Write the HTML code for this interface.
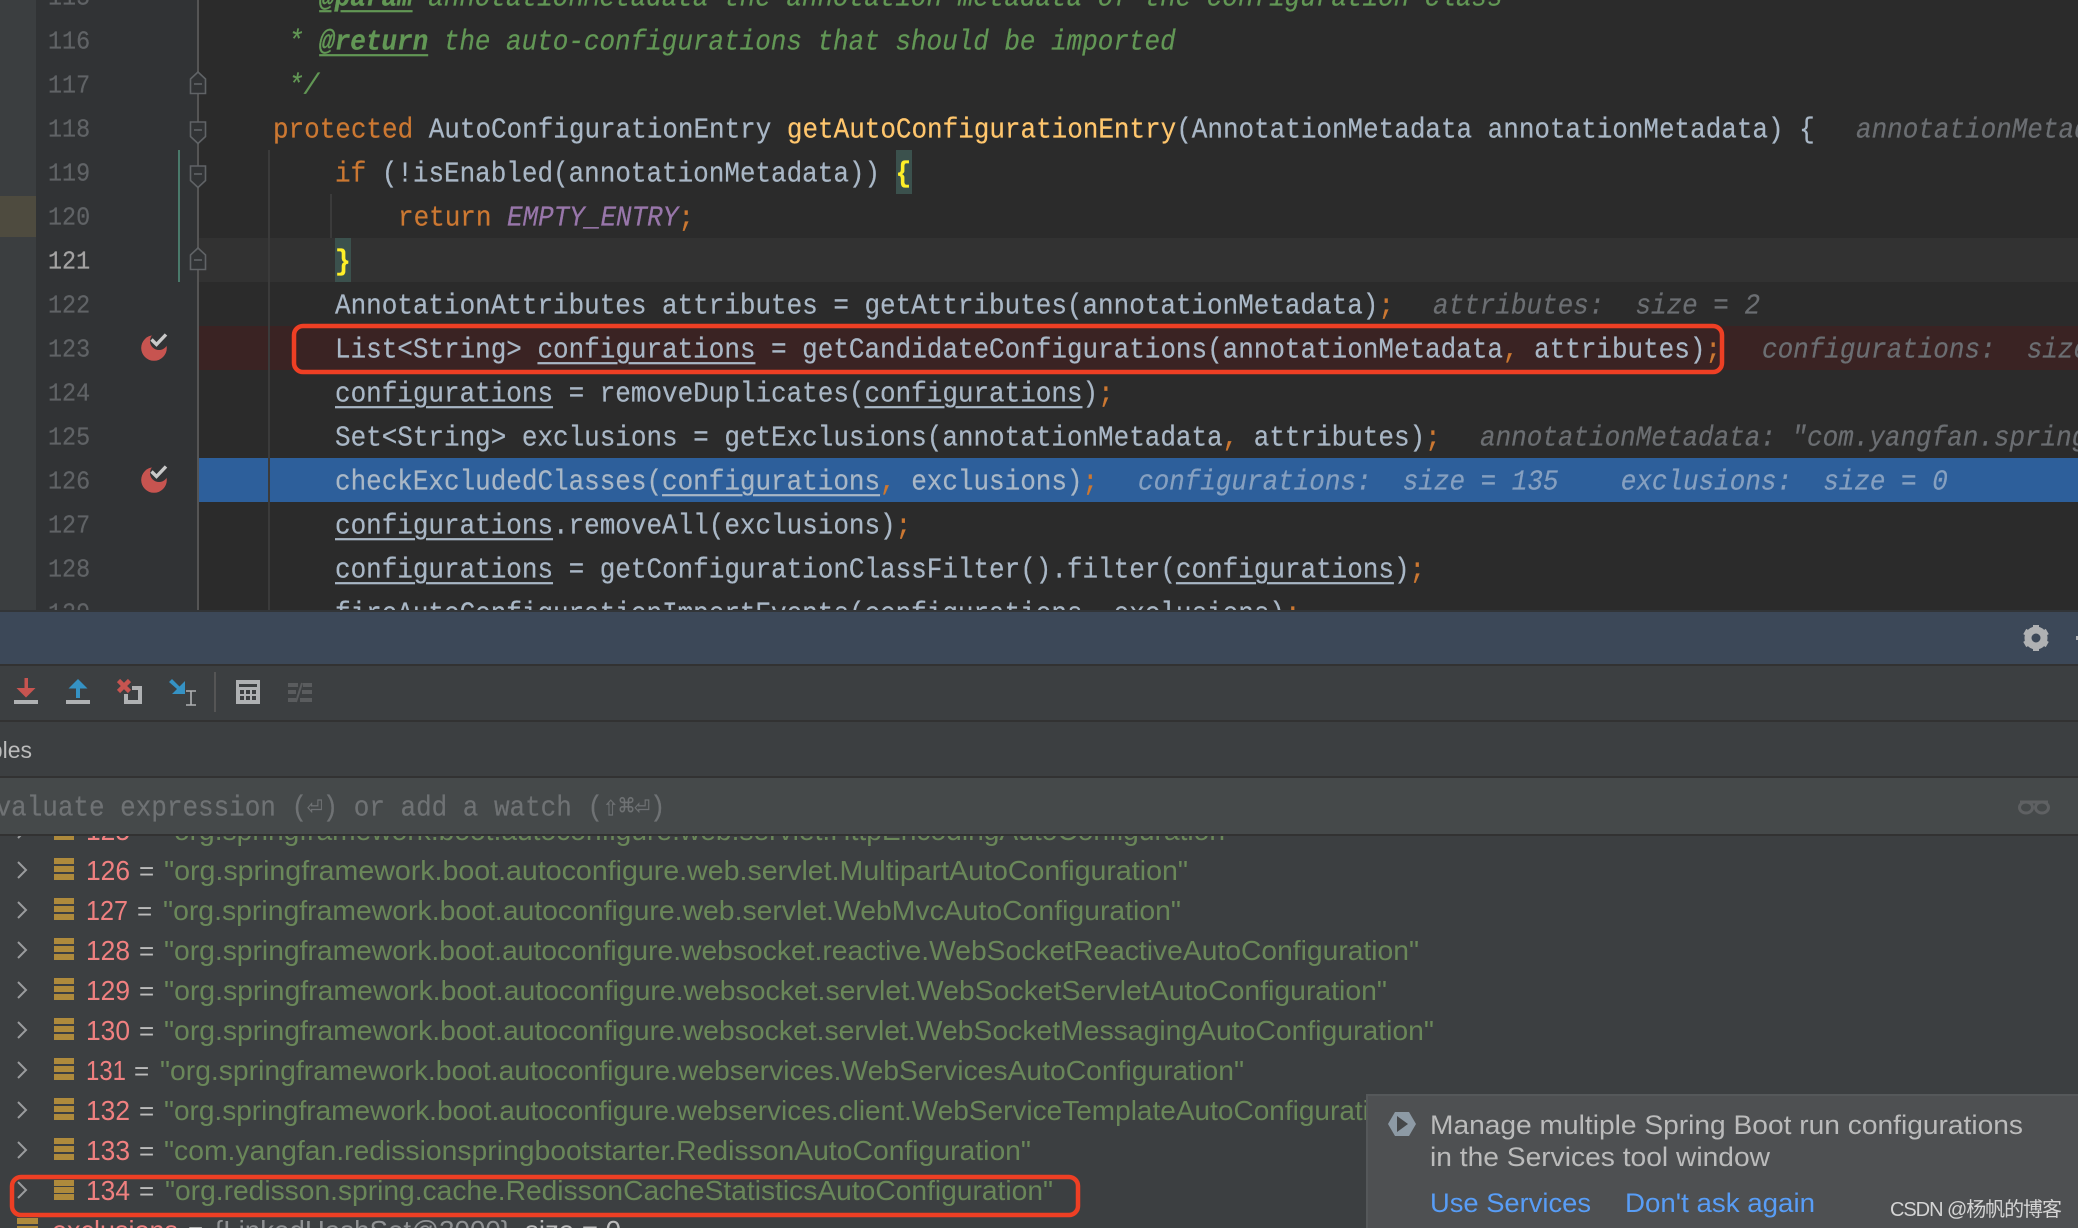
<!DOCTYPE html>
<html><head><meta charset="utf-8">
<style>
html,body{margin:0;padding:0;background:#2b2b2b}
#p{position:relative;width:2078px;height:1228px;overflow:hidden;background:#3c3f41}
.a{position:absolute}
#ed{position:absolute;left:0;top:0;width:2078px;height:610px;overflow:hidden;background:#2b2b2b}
.l,.n{position:absolute;white-space:pre;font:26px/44px "Liberation Mono",monospace;letter-spacing:-.03px;color:#a9b7c6;height:44px;transform:scaleY(1.1);transform-origin:50% 50%;-webkit-text-stroke:.2px}
.l{margin-top:2px}
.n{left:48px;width:42px;font-size:23.4px;color:#606366;letter-spacing:0;margin-top:3px;transform:scaleY(1.12)}
.k{color:#cc7832}.m{color:#ffc66d}.u{text-decoration:underline;text-underline-offset:4px;text-decoration-thickness:2px}
.c{color:#629755;font-style:italic}.c b{text-decoration:underline;text-underline-offset:4px;font-weight:bold}
.h{color:#6b6e72;font-style:italic}.s{color:#cc7832}
.y{color:#ffef28;font-weight:bold}
svg{position:absolute;left:0;top:0;overflow:hidden}
</style></head><body><div id="p">
<div id="ed">
<div class="a" style="left:0;top:0;width:36px;height:610px;background:#3b3e40"></div>
<div class="a" style="left:36px;top:0;width:161px;height:610px;background:#313335"></div>
<div class="a" style="left:0;top:196px;width:36px;height:41px;background:#4e4b3f"></div>
<div class="a" style="left:199px;top:238px;width:1879px;height:44px;background:#323232"></div>
<div class="a" style="left:199px;top:326px;width:1879px;height:44px;background:#3a2323"></div>
<div class="a" style="left:199px;top:458px;width:1879px;height:44px;background:#2d5f9b"></div>
<div class="a" style="left:197px;top:0;width:2px;height:610px;background:#555"></div>
<div class="a" style="left:268px;top:150px;width:2px;height:460px;background:#3b3b3b"></div>
<div class="a" style="left:330px;top:194px;width:2px;height:44px;background:#3b3b3b"></div>
<div class="a" style="left:178px;top:150px;width:2px;height:132px;background:#4a7a6b"></div>
<div class="a" style="left:896px;top:150px;width:16px;height:44px;background:#3b514d"></div>
<div class="a" style="left:335px;top:238px;width:16px;height:44px;background:#3b514d"></div>

<div class="n" style="top:-26px">115</div>
<div class="n" style="top:18px">116</div>
<div class="n" style="top:62px">117</div>
<div class="n" style="top:106px">118</div>
<div class="n" style="top:150px">119</div>
<div class="n" style="top:194px">120</div>
<div class="n" style="top:238px;color:#a4a3a3">121</div>
<div class="n" style="top:282px">122</div>
<div class="n" style="top:326px">123</div>
<div class="n" style="top:370px">124</div>
<div class="n" style="top:414px">125</div>
<div class="n" style="top:458px">126</div>
<div class="n" style="top:502px">127</div>
<div class="n" style="top:546px">128</div>
<div class="n" style="top:590px">129</div>

<div class="l c" style="left:288px;top:-26px">* <b>@param</b> annotationMetadata the annotation metadata of the configuration class</div>
<div class="l c" style="left:288px;top:18px">* <b>@return</b> the auto-configurations that should be imported</div>
<div class="l c" style="left:288px;top:62px">*/</div>
<div class="l" style="left:273px;top:106px"><span class="k">protected</span> AutoConfigurationEntry <span class="m">getAutoConfigurationEntry</span>(AnnotationMetadata annotationMetadata) {</div>
<div class="l h" style="left:1856px;top:106px">annotationMetadata: "com.yangfan</div>
<div class="l" style="left:335px;top:150px"><span class="k">if</span> (!isEnabled(annotationMetadata)) <span class="y">{</span></div>
<div class="l" style="left:398px;top:194px"><span class="k">return</span> <span style="color:#9876aa;font-style:italic">EMPTY_ENTRY</span><span class="s">;</span></div>
<div class="l y" style="left:335px;top:238px">}</div>
<div class="l" style="left:335px;top:282px">AnnotationAttributes attributes = getAttributes(annotationMetadata)<span class="s">;</span></div>
<div class="l h" style="left:1433px;top:282px">attributes:  size = 2</div>
<div class="l" style="left:335px;top:326px">List&lt;String&gt; <span class="u">configurations</span> = getCandidateConfigurations(annotationMetadata<span class="s">,</span> attributes)<span class="s">;</span></div>
<div class="l h" style="left:1762px;top:326px">configurations:  size = 135</div>
<div class="l" style="left:335px;top:370px"><span class="u">configurations</span> = removeDuplicates(<span class="u">configurations</span>)<span class="s">;</span></div>
<div class="l" style="left:335px;top:414px">Set&lt;String&gt; exclusions = getExclusions(annotationMetadata<span class="s">,</span> attributes)<span class="s">;</span></div>
<div class="l h" style="left:1480px;top:414px">annotationMetadata: "com.yangfan.springboot</div>
<div class="l" style="left:335px;top:458px">checkExcludedClasses(<span class="u">configurations</span><span class="s">,</span> exclusions)<span class="s">;</span></div>
<div class="l h" style="left:1138px;top:458px;color:#86a0c0">configurations:  size = 135    exclusions:  size = 0</div>
<div class="l" style="left:335px;top:502px"><span class="u">configurations</span>.removeAll(exclusions)<span class="s">;</span></div>
<div class="l" style="left:335px;top:546px"><span class="u">configurations</span> = getConfigurationClassFilter().filter(<span class="u">configurations</span>)<span class="s">;</span></div>
<div class="l" style="left:335px;top:590px">fireAutoConfigurationImportEvents(configurations, exclusions)<span class="s">;</span></div>

<svg width="400" height="610" viewBox="0 0 400 610">
<g fill="#313335" stroke="#606366" stroke-width="1.6">
<path d="M190.5 93.5V79L198 72l7.5 7V93.5Z"/><path d="M194 84h8" fill="none"/>
<path d="M190.5 122h15v14.500L198 143.500l-7.500-7Z"/><path d="M194 130h8" fill="none"/>
<path d="M190.500 166h15v14.500L198 187.500l-7.500-7Z"/><path d="M194 174h8" fill="none"/>
<path d="M190.500 269.500V255L198 248l7.500 7V269.500Z"/><path d="M194 260h8" fill="none"/>
</g>
<circle cx="154" cy="348" r="12.800" fill="#c75450"/>
<circle cx="159" cy="341" r="9" fill="#313335"/>
<path d="M151.500 339.500l5 5 9.500-10" fill="none" stroke="#c9c9c9" stroke-width="3.400"/>
<circle cx="154" cy="480" r="12.800" fill="#c75450"/>
<circle cx="159" cy="473" r="9" fill="#313335"/>
<path d="M151.500 471.500l5 5 9.500-10" fill="none" stroke="#c9c9c9" stroke-width="3.400"/>
</svg>
</div>

<div class="a" style="left:0;top:610px;width:2078px;height:2px;background:#323538"></div>
<div class="a" style="left:0;top:612px;width:2078px;height:52px;background:#3c4858"></div>
<div class="a" style="left:0;top:664px;width:2078px;height:2px;background:#323232"></div>
<div class="a" style="left:0;top:720px;width:2078px;height:2px;background:#323232"></div>
<div class="a" style="left:0;top:776px;width:2078px;height:2px;background:#323232"></div>
<div class="a" style="left:0;top:778px;width:2078px;height:56px;background:#45494a"></div>
<div class="a" style="left:0;top:834px;width:2078px;height:2px;background:#323232"></div>

<div class="l" style="left:-20px;top:784px;color:#6f7274">Evaluate expression (⏎) or add a watch (⇧⌘⏎)</div>

<svg width="2078" height="1228" viewBox="0 0 2078 1228" style="font-family:'Liberation Sans',sans-serif">
<!-- toolbar -->
<rect x="14" y="700" width="24" height="4" fill="#afb1b3"/>
<path d="M24.500 678h3.500v10h7.500L26 697.500 16.500 688h8Z" fill="#c75450"/>
<rect x="66" y="700" width="24" height="4" fill="#afb1b3"/>
<path d="M78 679l9.500 9.500H80V698h-4V688.500H68.500Z" fill="#3592c4"/>
<path d="M132 688h8v14h-14v-8" fill="none" stroke="#afb1b3" stroke-width="4"/>
<path d="M118.500 680.500l11 11M129.500 680.500l-11 11" stroke="#c75450" stroke-width="4.500" fill="none"/>
<path d="M169 682l3-3 7.500 7.500 5.500-5.500v13h-13l5-5Z" fill="#3592c4"/>
<path d="M186 691h10M186 705h10M191 691v14" stroke="#afb1b3" stroke-width="1.600" fill="none"/>
<rect x="214" y="672" width="2" height="40" fill="#555"/>
<rect x="236" y="680" width="24" height="24" fill="#afb1b3"/>
<rect x="239" y="684" width="18" height="3" fill="#3c3f41"/>
<g fill="#3c3f41"><rect x="240" y="690" width="4" height="4"/><rect x="246" y="690" width="4" height="4"/><rect x="252" y="690" width="4" height="4"/><rect x="240" y="696" width="4" height="4"/><rect x="246" y="696" width="4" height="4"/><rect x="252" y="696" width="4" height="4"/></g>
<g fill="#5a5c5e"><rect x="288" y="683" width="10" height="4"/><rect x="303" y="683" width="9" height="4"/><rect x="288" y="690" width="8" height="4"/><rect x="302" y="690" width="10" height="4"/><rect x="288" y="698" width="8" height="4"/><rect x="300" y="698" width="12" height="4"/></g>
<path d="M296 702l6-19" stroke="#5a5c5e" stroke-width="2" fill="none"/>
<!-- tab text -->
<text x="32" y="758" text-anchor="end" font-size="23" fill="#bbbbbb">Variables</text>
<!-- gear -->
<g transform="translate(2036 638)" fill="#afb1b3">
<circle r="8" fill="none" stroke="#afb1b3" stroke-width="7"/>
<rect x="-3" y="-13" width="6" height="5"/><rect x="-3" y="8" width="6" height="5"/>
<g transform="rotate(60)"><rect x="-3" y="-13" width="6" height="5"/><rect x="-3" y="8" width="6" height="5"/></g>
<g transform="rotate(120)"><rect x="-3" y="-13" width="6" height="5"/><rect x="-3" y="8" width="6" height="5"/></g>
</g>
<rect x="2076" y="636" width="2" height="4" fill="#afb1b3"/>
<!-- glasses -->
<g fill="none" stroke="#5f6163" stroke-width="3">
<path d="M2020 802h28"/>
<ellipse cx="2026" cy="807.500" rx="6.500" ry="5.500"/><ellipse cx="2042" cy="807.500" rx="6.500" ry="5.500"/>
</g>

<!-- list -->
<defs><clipPath id="lc"><rect x="0" y="836" width="2078" height="392"/></clipPath></defs>
<g clip-path="url(#lc)" font-size="28" lengthAdjust="spacingAndGlyphs">
<g fill="none" stroke="#9a9c9e" stroke-width="2"><path d="M18 822l8 8-8 8M18 862l8 8-8 8M18 902l8 8-8 8M18 942l8 8-8 8M18 982l8 8-8 8M18 1022l8 8-8 8M18 1062l8 8-8 8M18 1102l8 8-8 8M18 1142l8 8-8 8M18 1182l8 8-8 8"/></g>
<g fill="#ae8a3c">
<path d="M54 818h20v6H54ZM54 826h20v6H54ZM54 834h20v6H54Z"/>
<path d="M54 858h20v6H54ZM54 866h20v6H54ZM54 874h20v6H54Z"/>
<path d="M54 898h20v6H54ZM54 906h20v6H54ZM54 914h20v6H54Z"/>
<path d="M54 938h20v6H54ZM54 946h20v6H54ZM54 954h20v6H54Z"/>
<path d="M54 978h20v6H54ZM54 986h20v6H54ZM54 994h20v6H54Z"/>
<path d="M54 1018h20v6H54ZM54 1026h20v6H54ZM54 1034h20v6H54Z"/>
<path d="M54 1058h20v6H54ZM54 1066h20v6H54ZM54 1074h20v6H54Z"/>
<path d="M54 1098h20v6H54ZM54 1106h20v6H54ZM54 1114h20v6H54Z"/>
<path d="M54 1138h20v6H54ZM54 1146h20v6H54ZM54 1154h20v6H54Z"/>
<path d="M54 1180h20v6H54ZM54 1187h20v6H54ZM54 1194h20v6H54Z"/>
<path d="M17 1218h21v6H17ZM17 1226h21v6H17Z"/>
</g>
<g fill="#f08080">
<text x="86" y="840" textLength="44" lengthAdjust="spacingAndGlyphs">125</text>
<text x="86" y="880" textLength="44" lengthAdjust="spacingAndGlyphs">126</text>
<text x="86" y="920" textLength="42" lengthAdjust="spacingAndGlyphs">127</text>
<text x="86" y="960" textLength="44" lengthAdjust="spacingAndGlyphs">128</text>
<text x="86" y="1000" textLength="44" lengthAdjust="spacingAndGlyphs">129</text>
<text x="86" y="1040" textLength="44" lengthAdjust="spacingAndGlyphs">130</text>
<text x="86" y="1080" textLength="40" lengthAdjust="spacingAndGlyphs">131</text>
<text x="86" y="1120" textLength="44" lengthAdjust="spacingAndGlyphs">132</text>
<text x="86" y="1160" textLength="44" lengthAdjust="spacingAndGlyphs">133</text>
<text x="86" y="1200" textLength="44" lengthAdjust="spacingAndGlyphs">134</text>
<text x="52" y="1240" textLength="126" lengthAdjust="spacingAndGlyphs">exclusions</text>
</g>
<g fill="#bbbbbb">
<text x="139" y="840" font-size="26">=</text><text x="139" y="880" font-size="26">=</text><text x="137" y="920" font-size="26">=</text><text x="139" y="960" font-size="26">=</text><text x="139" y="1000" font-size="26">=</text><text x="139" y="1040" font-size="26">=</text><text x="134" y="1080" font-size="26">=</text><text x="139" y="1120" font-size="26">=</text><text x="139" y="1160" font-size="26">=</text><text x="139" y="1200" font-size="26">=</text><text x="188" y="1240" font-size="26">=</text>
<text x="214" y="1240" fill="#8f9193" textLength="296" lengthAdjust="spacingAndGlyphs">{LinkedHashSet@3000}</text>
<text x="525" y="1240" textLength="96" lengthAdjust="spacingAndGlyphs">size = 0</text>
</g>
<g fill="#6a8759">
<text x="164" y="840" textLength="1071" lengthAdjust="spacingAndGlyphs">"org.springframework.boot.autoconfigure.web.servlet.HttpEncodingAutoConfiguration"</text>
<text x="164" y="880" textLength="1024" lengthAdjust="spacingAndGlyphs">"org.springframework.boot.autoconfigure.web.servlet.MultipartAutoConfiguration"</text>
<text x="163" y="920" textLength="1018" lengthAdjust="spacingAndGlyphs">"org.springframework.boot.autoconfigure.web.servlet.WebMvcAutoConfiguration"</text>
<text x="164" y="960" textLength="1255" lengthAdjust="spacingAndGlyphs">"org.springframework.boot.autoconfigure.websocket.reactive.WebSocketReactiveAutoConfiguration"</text>
<text x="164" y="1000" textLength="1223" lengthAdjust="spacingAndGlyphs">"org.springframework.boot.autoconfigure.websocket.servlet.WebSocketServletAutoConfiguration"</text>
<text x="164" y="1040" textLength="1270" lengthAdjust="spacingAndGlyphs">"org.springframework.boot.autoconfigure.websocket.servlet.WebSocketMessagingAutoConfiguration"</text>
<text x="160" y="1080" textLength="1084" lengthAdjust="spacingAndGlyphs">"org.springframework.boot.autoconfigure.webservices.WebServicesAutoConfiguration"</text>
<text x="164" y="1120" textLength="1246" lengthAdjust="spacingAndGlyphs">"org.springframework.boot.autoconfigure.webservices.client.WebServiceTemplateAutoConfiguration"</text>
<text x="164" y="1160" textLength="867" lengthAdjust="spacingAndGlyphs">"com.yangfan.redissionspringbootstarter.RedissonAutoConfiguration"</text>
<text x="165" y="1200" textLength="888" lengthAdjust="spacingAndGlyphs">"org.redisson.spring.cache.RedissonCacheStatisticsAutoConfiguration"</text>
</g>
</g>
<!-- popup -->
<rect x="1366" y="1094" width="712" height="134" fill="#4e5052"/>
<rect x="1366" y="1094" width="712" height="2" fill="#55585a"/>
<rect x="1366" y="1094" width="2" height="134" fill="#55585a"/>
<path d="M1395 1112h14l7 12-7 12h-14l-7-12Z" fill="#8d9aa5"/>
<path d="M1397 1116l11 8-11 8Z" fill="#454749"/>
<g font-size="27" fill="#bbbbbb">
<text x="1430" y="1134" textLength="593" lengthAdjust="spacingAndGlyphs">Manage multiple Spring Boot run configurations</text>
<text x="1430" y="1166" textLength="340" lengthAdjust="spacingAndGlyphs">in the Services tool window</text>
</g>
<g font-size="27" fill="#589df6">
<text x="1430" y="1212" textLength="161" lengthAdjust="spacingAndGlyphs">Use Services</text>
<text x="1625" y="1212" textLength="190" lengthAdjust="spacingAndGlyphs">Don't ask again</text>
</g>
<text x="1890" y="1216" font-size="20" fill="#d4d4d4" textLength="172" style="font-family:'Liberation Sans','Noto Sans CJK SC',sans-serif">CSDN @杨帆的博客</text>
<!-- red annotation boxes -->
<rect x="294" y="326" width="1428" height="46" rx="9" fill="none" stroke="#ee3f24" stroke-width="4.500"/>
<rect x="12" y="1177" width="1066" height="38" rx="9" fill="none" stroke="#ee3f24" stroke-width="4.500"/>
</svg>
</div></body></html>
